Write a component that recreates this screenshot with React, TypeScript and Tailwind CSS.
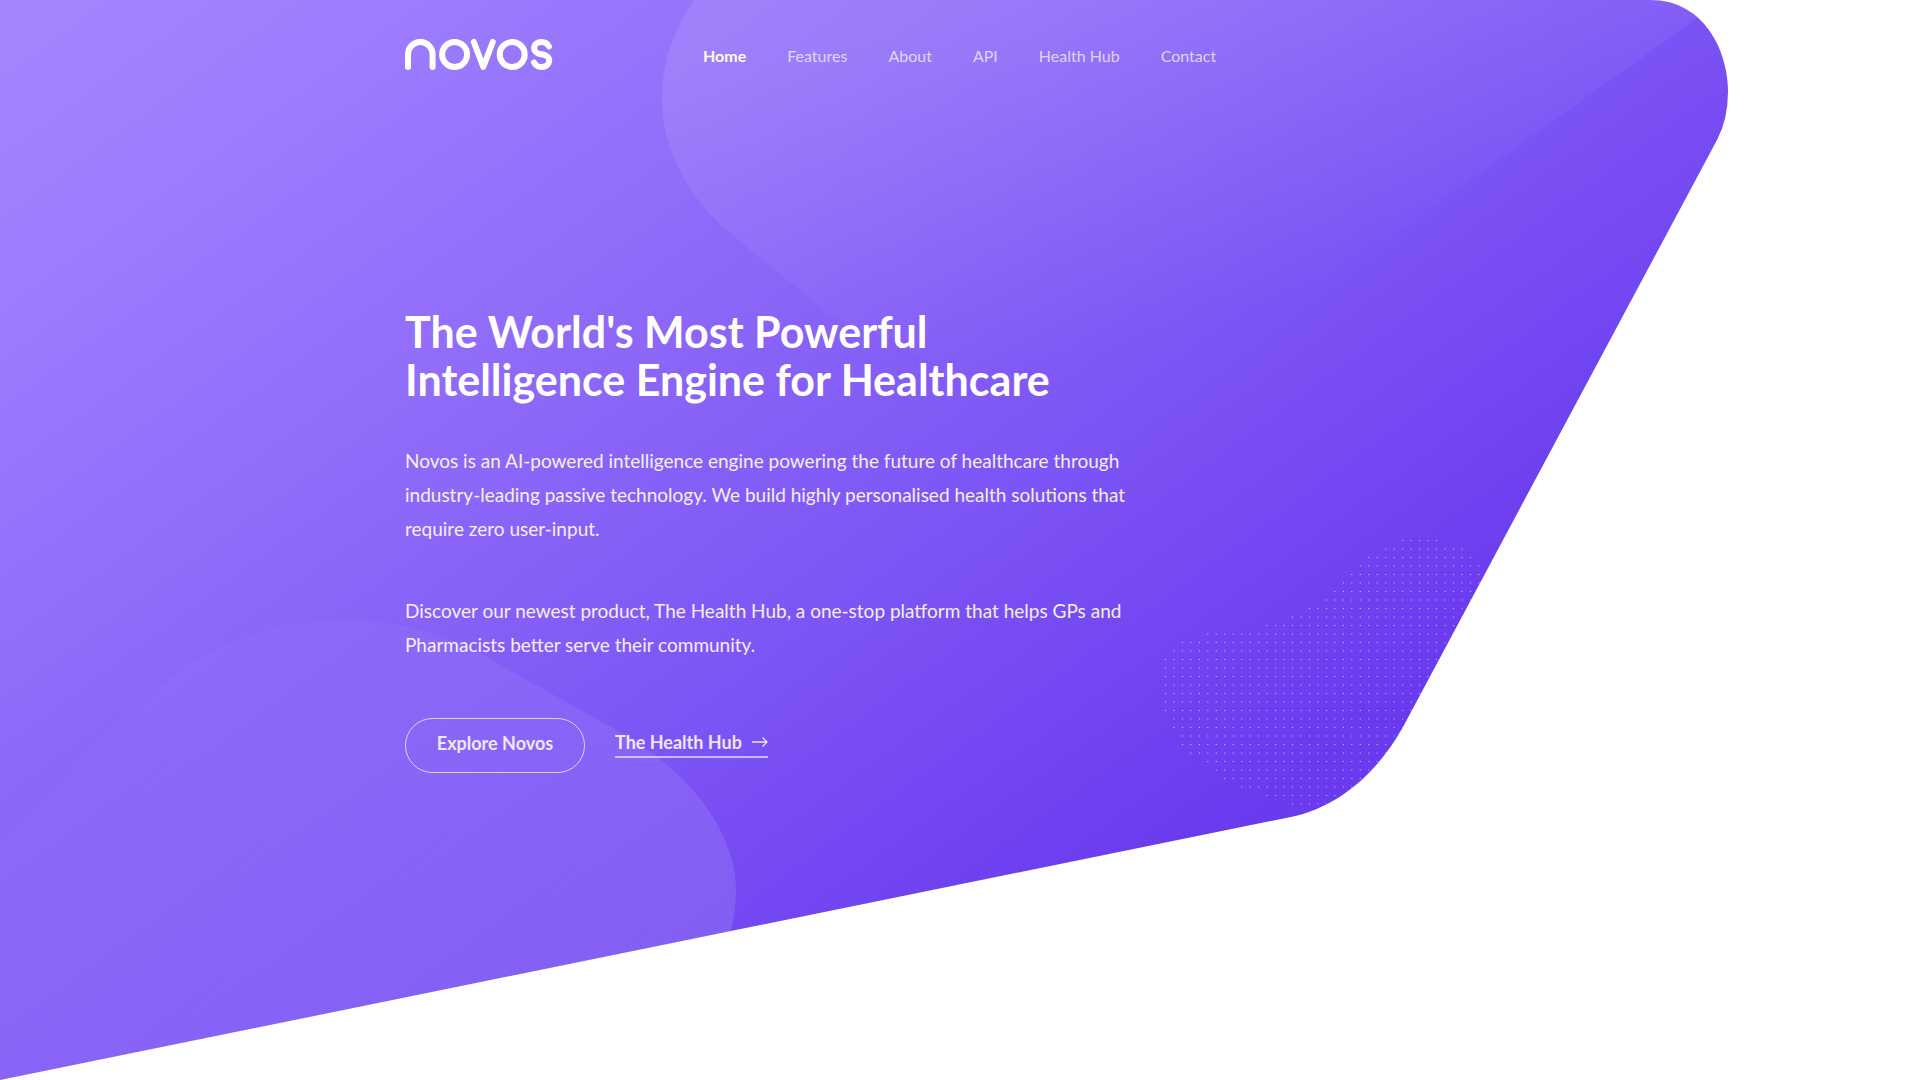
const navItems = ["Home", "Features", "About", "API", "Health Hub", "Contact"];

// first and last column of every dot row
const dotRows: [number, number][] = [
  [28, 32], [26, 35], [24, 36], [23, 37], [22, 37], [21, 37], [20, 37], [19, 37],
  [17, 37], [15, 37], [12, 37], [5, 37], [2, 37], [1, 37], [0, 37], [0, 37],
  [0, 37], [0, 37], [0, 37], [0, 37], [0, 37], [1, 37], [1, 37], [2, 37],
  [2, 37], [3, 37], [5, 37], [6, 37], [7, 37], [9, 37], [12, 37], [15, 37],
];

const Logo = () => (
  <svg
    className="h-8 w-[148px] shrink-0"
    viewBox="0 0 148 32"
    fill="none"
    stroke="white"
    strokeWidth="6"
    strokeLinecap="round"
    strokeLinejoin="round"
    role="img"
    aria-label="Novos"
  >
    <path d="M3 28V15.500a12.200 12.500 0 0 1 24.600 0V28" />
    <circle cx="49.600" cy="15.500" r="12.500" />
    <path d="M68.800 3 78.300 28 87.800 3" />
    <circle cx="107.200" cy="15.500" r="12.500" />
    <path d="M144 7.500C142.500 4.500 140 3 136.500 3C127.500 3 126.500 13.500 135 15L139 15.800C147 17.500 145.500 28 136.500 28C133 28 130.500 26.500 129 23.500" />
  </svg>
);

const HeroBackground = () => {
  const outline =
    "M0 0H1650C1705 0 1728 52 1728 92Q1728 119 1717 140L1403 727C1378 772 1339 807 1291 817L0 1080Z";

  return (
    <svg className="col-start-1 row-start-1 h-auto w-full" viewBox="0 0 1920 1080" aria-hidden="true">
      <defs>
        <linearGradient id="base" gradientUnits="userSpaceOnUse" x1="0" y1="0" x2="825" y2="1127">
          <stop offset="0" stopColor="#a586ff" />
          <stop offset="0.18" stopColor="#9d7cfe" />
          <stop offset="0.46" stopColor="#8d68f8" />
          <stop offset="0.72" stopColor="#7c53f5" />
          <stop offset="1" stopColor="#693aee" />
        </linearGradient>
        <linearGradient id="top" gradientUnits="userSpaceOnUse" x1="1050" y1="0" x2="1130" y2="350">
          <stop offset="0" stopColor="white" stopOpacity="0.1" />
          <stop offset="1" stopColor="white" stopOpacity="0" />
        </linearGradient>
        <linearGradient id="bottom" gradientUnits="userSpaceOnUse" x1="300" y1="600" x2="620" y2="1000">
          <stop offset="0" stopColor="white" stopOpacity="0.02" />
          <stop offset="1" stopColor="white" stopOpacity="0.12" />
        </linearGradient>
        <clipPath id="shape">
          <path d={outline} />
        </clipPath>
      </defs>
      <g clipPath="url(#shape)">
        <path d="M0 0H1920V1080H0Z" fill="url(#base)" />
        <path
          d="M694 0C672 32 662 64 662 100C662 150 690 200 730 233L830 315L1100 440L1420 216L1700 16V0Z"
          fill="url(#top)"
        />
        <path
          d="M0 843L140 705C240 600 400 600 500 665L620 732C700 778 736 840 736 890Q736 910 730 935L0 1080Z"
          fill="url(#bottom)"
        />
        {dotRows.map(([from, to], row) =>
          Array.from({ length: to - from + 1 }, (_, i) => (
            <rect
              key={`${row}-${i}`}
              x={1165 + (from + i) * 8.47}
              y={540 + row * 8.5}
              width="1"
              height="1"
              fill="white"
              fillOpacity="0.7"
            />
          ))
        )}
      </g>
    </svg>
  );
};

const App = () => {
  return (
    <main className="grid overflow-hidden bg-white font-['Lato',sans-serif] text-white">
      <HeroBackground />

      <div className="col-start-1 row-start-1 mx-auto w-full max-w-[1140px] px-[15px]">
        <header className="flex items-start pt-[39px]">
          <a href="#home">
            <Logo />
          </a>
          <nav className="ml-[150px] flex gap-[41px] pt-[5px] text-[16px] leading-6">
            {navItems.map((item, i) => (
              <a key={item} href="#" className={i === 0 ? "font-bold" : "text-white/70"}>
                {item}
              </a>
            ))}
          </nav>
        </header>

        <section className="pt-[237px]">
          <h1 className="text-[43px] leading-12 font-bold">
            The World's Most Powerful
            <br />
            Intelligence Engine for Healthcare
          </h1>
          <p className="mt-10 text-[19px] leading-[34px] text-white/90">
            Novos is an AI-powered intelligence engine powering the future of healthcare through
            <br />
            industry-leading passive technology. We build highly personalised health solutions that
            <br />
            require zero user-input.
          </p>
          <p className="mt-12 text-[19px] leading-[34px] text-white/90">
            Discover our newest product, The Health Hub, a one-stop platform that helps GPs and
            <br />
            Pharmacists better serve their community.
          </p>
          <div className="mt-14 flex items-start gap-[30px] text-[18px] leading-6 font-bold text-white/85">
            <button className="h-[55px] w-[180px] rounded-full border border-white/70 pb-[6px]">Explore Novos</button>
            <a href="#health-hub" className="mt-3 flex items-center gap-[10px] border-b-2 border-white/60 pb-[2px]">
              The Health Hub
              <svg className="h-3 w-4" viewBox="0 0 16 12" fill="none" stroke="currentColor" strokeWidth="1.300">
                <path d="M0 6H15M10.500 1.500 15 6l-4.500 4.500" />
              </svg>
            </a>
          </div>
        </section>
      </div>
    </main>
  );
};

export default App;
